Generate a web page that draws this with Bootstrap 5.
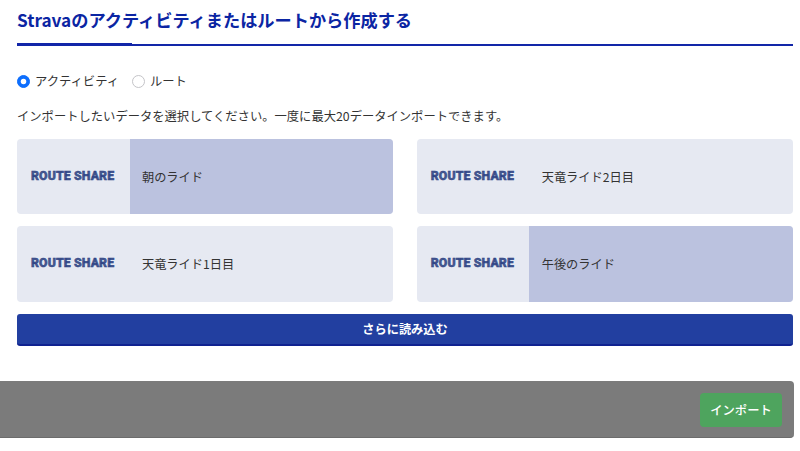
<!DOCTYPE html>
<html lang="ja">
<head>
<meta charset="utf-8">
<title>Strava</title>
<link href="https://cdn.jsdelivr.net/npm/bootstrap@5.3.0/dist/css/bootstrap.min.css" rel="stylesheet">
<style>
html,body{height:451px;overflow:hidden;background:#fff}
body{font-family:"Noto Sans CJK JP","Noto Sans",sans-serif;color:#212529;font-size:12px}
.page-wrap{padding:0 7px 0 17px}
.head-title{font-size:17.2px;font-weight:700;color:#0b25a3;line-height:26px;padding-top:7px;height:44px;margin:0}
.head-rule{border-bottom:2px solid #1226a8;position:relative;height:1px}
.head-rule::before{content:"";position:absolute;left:0;top:-1px;width:115px;height:3px;background:#1226a8}
.radio-row{margin-top:27px;height:16px;line-height:16px}
.radio-row .form-check-input{width:13px;height:13px;margin:0 5px 0 0;float:none;border-color:#c4c4c8}
.radio-row .form-check-input:checked{border-color:#0d6efd}
.radio-row label{font-size:12.3px;color:#333}
.radio-row label.first-pick{margin-right:13px}
.lead-text{font-size:12.3px;margin:18px 0 0;line-height:18px;color:#333;height:18px}
.route-grid{display:grid;grid-template-columns:1fr 1fr;grid-template-rows:75px 76px;column-gap:23.5px;row-gap:12px;margin-top:14px}
.route-tile{background:#e6e9f2;border-radius:4px;overflow:hidden;display:flex;align-items:stretch}
.route-tile.picked .route-name{background:#bbc2df}
.route-mark{width:112.5px;flex:none;display:flex;align-items:center;padding:0 0 1px 14px;font-family:Roboto,sans-serif;font-weight:900;font-size:12.3px;letter-spacing:.1px;color:#46598f;-webkit-text-stroke:.45px #2a3f85;white-space:nowrap}
.route-name{flex:1;display:flex;align-items:center;padding:1px 0 0 12.5px;font-size:12.2px;color:#333}
.more-btn{display:block;width:100%;height:32px;margin-top:12px;padding:0;font-size:12.2px;font-weight:700;color:#fff;background:#223fa0;border:0;border-bottom:2px solid #0f2290;border-radius:3px;line-height:30px}
.foot-bar{position:fixed;left:0;top:381px;width:794px;height:57px;background:#7b7b7b;border-radius:0 4px 4px 0;border-bottom:1px solid #6c6c6c;display:flex;align-items:flex-start;justify-content:flex-end;padding:12px 12px 0 0}
.import-btn{width:82px;height:34px;padding:0;background:#4ea45e;border:0;color:#fff;font-size:12.3px;font-weight:500;border-radius:4px}
</style>
</head>
<body>
<div class="page-wrap">
  <h2 class="head-title">Stravaのアクティビティまたはルートから作成する</h2>
  <div class="head-rule"></div>
  <div class="radio-row d-flex align-items-center">
    <input class="form-check-input" type="radio" name="src" id="r1" checked>
    <label for="r1" class="first-pick">アクティビティ</label>
    <input class="form-check-input" type="radio" name="src" id="r2">
    <label for="r2">ルート</label>
  </div>
  <p class="lead-text">インポートしたいデータを選択してください。一度に最大20データインポートできます。</p>
  <div class="route-grid">
    <div class="route-tile picked"><div class="route-mark">ROUTE SHARE</div><div class="route-name">朝のライド</div></div>
    <div class="route-tile"><div class="route-mark">ROUTE SHARE</div><div class="route-name">天竜ライド2日目</div></div>
    <div class="route-tile"><div class="route-mark">ROUTE SHARE</div><div class="route-name">天竜ライド1日目</div></div>
    <div class="route-tile picked"><div class="route-mark">ROUTE SHARE</div><div class="route-name">午後のライド</div></div>
  </div>
  <button class="btn more-btn" type="button">さらに読み込む</button>
</div>
<div class="foot-bar"><button class="btn import-btn" type="button">インポート</button></div>
<script src="https://cdn.jsdelivr.net/npm/bootstrap@5.3.0/dist/js/bootstrap.bundle.min.js"></script>
</body>
</html>
